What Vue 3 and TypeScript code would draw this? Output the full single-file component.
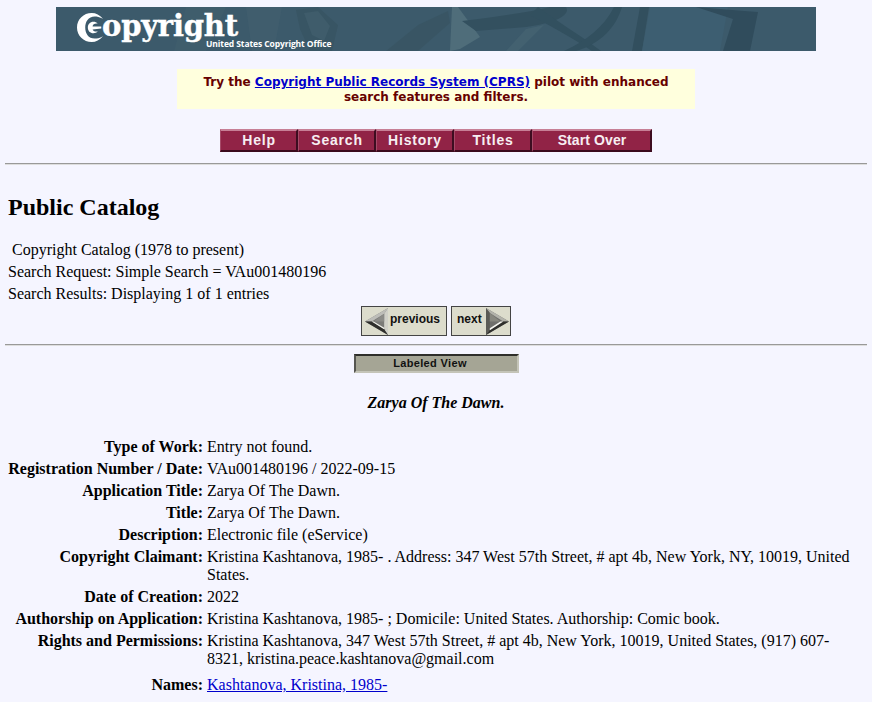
<script setup lang="ts">
interface Row { label: string; value: string; link?: boolean; extra?: boolean }
const navItems = [
  { label: 'Help', wide: false },
  { label: 'Search', wide: false },
  { label: 'History', wide: false },
  { label: 'Titles', wide: false },
  { label: 'Start Over', wide: true },
]
const rows: Row[] = [
  { label: 'Type of Work:', value: 'Entry not found.' },
  { label: 'Registration Number / Date:', value: 'VAu001480196 / 2022-09-15' },
  { label: 'Application Title:', value: 'Zarya Of The Dawn.' },
  { label: 'Title:', value: 'Zarya Of The Dawn.' },
  { label: 'Description:', value: 'Electronic file (eService)' },
  { label: 'Copyright Claimant:', value: 'Kristina Kashtanova, 1985- . Address: 347 West 57th Street, # apt 4b, New York, NY, 10019, United States.' },
  { label: 'Date of Creation:', value: '2022' },
  { label: 'Authorship on Application:', value: 'Kristina Kashtanova, 1985- ; Domicile: United States. Authorship: Comic book.' },
  { label: 'Rights and Permissions:', value: 'Kristina Kashtanova, 347 West 57th Street, # apt 4b, New York, 10019, United States, (917) 607-8321, kristina.peace.kashtanova@gmail.com' },
  { label: 'Names:', value: 'Kashtanova, Kristina, 1985-', link: true, extra: true },
]
</script>

<template>
  <div class="page">
    <header class="banner">
      <svg class="art" viewBox="0 0 760 44" preserveAspectRatio="none" aria-hidden="true">
        <rect width="760" height="44" fill="#3c5a6b" />
        <path d="M130 0 L170 0 L150 44 L118 44 Z" fill="#415f6e" opacity=".5" />
        <path d="M190 0 L226 0 L218 44 L196 44 Z" fill="#446170" opacity=".45" />
        <path d="M240 3 L262 0 L282 18 L276 44 L254 44 L244 22 Z" fill="#36515f" opacity=".6" />
        <path d="M248 6 L262 4 L274 19 L268 34 L256 28 Z" fill="#466371" opacity=".5" />
        <path d="M330 44 L362 18 L392 4 L394 16 L362 44 Z" fill="#37525f" opacity=".55" />
        <path d="M396 0 L402 0 L424 30 L404 42 L394 44 Z" fill="#4f6d7a" />
        <path d="M406 14 C440 10 480 4 494 0 L510 0 C515 8 500 16 470 20 L420 24 Z" fill="#33505f" />
        <path d="M470 22 L488 18 L462 44 L450 44 Z" fill="#466472" opacity=".7" />
        <path d="M482 0 C500 14 520 25 545 44 L536 44 C512 28 492 18 474 8 Z" fill="#32505f" />
        <path d="M566 0 L558 0 C548 20 530 34 508 44 L520 44 C546 36 560 20 566 0 Z" fill="#32505f" />
        <path d="M584 0 L593 0 L586 44 L576 44 Z" fill="#324f5e" />
        <path d="M594 0 H672 L664 44 H586 Z" fill="#3d5e71" />
        <path d="M640 0 L688 4 L702 5 L694 44 L667 44 L677 12 Z" fill="#304c5c" />
      </svg>
      <div class="logo">
        <svg class="logo-c" viewBox="0 0 30 30" preserveAspectRatio="none" aria-hidden="true">
          <path fill="#fff" fill-rule="evenodd" d="M17 0 C7.500 0 0 6.500 0 15 C0 23.500 7.500 30 17 30 C22 30 26 28 30 24 C26 26 23 26.500 20.500 26.500 C13 26.500 9.500 21 9.500 15 C9.500 9 13 3.500 20.500 3.500 C23 3.500 26 4 30 6 C26 2 22 0 17 0 Z" />
          <path fill="#fff" d="M19 9 C15 9 12.500 11.500 12.500 15 C12.500 18.500 15 21 19 21 C21 21 22.500 20.500 24 19 C21 19.500 19 19 18 17 L28 16 L28 14 L18 14 C18 12 20.500 10.500 24 11 C22.500 9.500 21 9 19 9 Z" />
        </svg>
        <span class="logo-word">opyright</span>
        <span class="logo-sub">United States Copyright Office</span>
      </div>
    </header>

    <div class="notice">
      <p>Try the <a href="#">Copyright Public Records System (CPRS)</a> pilot with enhanced search features and filters.</p>
    </div>

    <nav class="nav">
      <a v-for="item in navItems" :key="item.label" href="#" class="nav-btn" :class="{ wide: item.wide }">{{ item.label }}</a>
    </nav>

    <hr class="rule first" />

    <h1 class="heading">Public Catalog</h1>

    <div class="meta">
      <div class="indent">Copyright Catalog (1978 to present)</div>
      <div>Search Request: Simple Search = VAu001480196</div>
      <div>Search Results: Displaying 1 of 1 entries</div>
    </div>

    <div class="pager">
      <a href="#" class="pg prev">
        <svg class="arrow" viewBox="0 0 24 28" aria-hidden="true">
          <path d="M24 0 L0 14 L24 28 Z" fill="#7b7b78" />
          <path d="M24 0 L0 14 L7 14 L20 6 Z" fill="#bdbdb8" />
          <path d="M24 0 L20 6 L20 22 L24 28 Z" fill="#d0d0c8" />
          <path d="M0 14 L24 28 L20 22 L7 14 Z" fill="#2f2f2c" />
          <path d="M7 14 L20 22 L20 20.600 L9 14 Z" fill="#f4f4ee" />
          <path d="M20 6 L9 14 L20 14 Z" fill="#8c8c88" />
        </svg>
        <span>previous</span>
      </a>
      <a href="#" class="pg next">
        <span>next</span>
        <svg class="arrow" viewBox="0 0 24 28" aria-hidden="true">
          <path d="M0 0 L24 14 L0 28 Z" fill="#6f6f6c" />
          <path d="M0 0 L24 14 L18 14 L4 5 Z" fill="#b2b2aa" />
          <path d="M0 0 L4 5 L4 23 L0 28 Z" fill="#5a5a55" />
          <path d="M24 14 L0 28 L4 23 L18 14 Z" fill="#2f2f2c" />
          <path d="M18 14 L4 23 L4 21 L15 14 Z" fill="#f7f7f2" />
          <path d="M4 5 L15 14 L4 14 Z" fill="#87877f" />
        </svg>
      </a>
    </div>

    <hr class="rule second" />

    <div class="view-row"><div class="view-tab">Labeled View</div></div>

    <div class="record-title">Zarya Of The Dawn.</div>

    <dl class="record">
      <div v-for="row in rows" :key="row.label" class="rec-row" :class="{ extra: row.extra }">
        <dt>{{ row.label }}</dt>
        <dd><a v-if="row.link" href="#" class="name-link">{{ row.value }}</a><template v-else>{{ row.value }}</template></dd>
      </div>
    </dl>
  </div>
</template>

<style>
html, body { margin: 0; background: #f5f5ff; overflow: hidden; }
</style>

<style scoped>
.page {
  font-family: "Liberation Serif", "Times New Roman", serif;
  font-size: 16px;
  line-height: 18px;
  color: #000;
  background: #f5f5ff;
  padding-top: 7px;
  display: flex;
  flex-direction: column;
}
.banner {
  position: relative;
  width: 760px;
  height: 44px;
  margin-left: 56px;
  overflow: hidden;
}
.art { position: absolute; inset: 0; width: 100%; height: 100%; display: block; }
.logo { position: absolute; inset: 0; }
.logo-c { position: absolute; left: 21px; top: 6px; width: 26px; height: 29px; }
.logo-word {
  position: absolute;
  left: 46px;
  top: 1px;
  font-family: "DejaVu Serif", serif;
  font-weight: 700;
  font-size: 29px;
  line-height: 36px;
  letter-spacing: -0.2px;
  -webkit-text-stroke: 0.4px #fff;
  color: #fff;
}
.logo-sub {
  position: absolute;
  left: 150px;
  top: 31px;
  font-family: "Open Sans", sans-serif;
  font-weight: 700;
  font-size: 8.5px;
  line-height: 12px;
  letter-spacing: -0.1px;
  color: #fff;
  white-space: nowrap;
}
.notice {
  box-sizing: border-box;
  width: 518px;
  height: 40px;
  margin: 18px 0 0 177px;
  padding-top: 6px;
  background: #ffffdd;
  display: flex;
  align-items: flex-start;
  justify-content: center;
}
.notice p {
  margin: 0;
  width: 490px;
  text-align: center;
  font-family: "DejaVu Sans", Verdana, sans-serif;
  font-weight: 700;
  font-size: 12px;
  line-height: 15px;
  color: #660000;
}
.notice a { color: #0000cc; }
.nav {
  display: flex;
  margin: 20px 0 0 220px;
  width: 432px;
  height: 23px;
}
.nav-btn {
  width: 78px;
  box-sizing: border-box;
  padding-left: 1px;
  background: #912346;
  border-top: 2px solid #c77f96;
  border-left: 1px solid #a64a68;
  border-right: 2px solid #3d0d20;
  border-bottom: 2px solid #3a0a1c;
  color: #f7eef2;
  text-decoration: none;
  text-align: center;
  font-family: "Liberation Sans", Arial, sans-serif;
  font-weight: 700;
  font-size: 14px;
  line-height: 18px;
  letter-spacing: 0.8px;
}
.nav-btn.wide { width: 120px; letter-spacing: 0.1px; }
.rule {
  margin: 0 5px;
  height: 0;
  border: 0;
  border-top: 1px solid #999;
  border-bottom: 1px solid #ddd;
}
.rule.first { margin-top: 11px; }
.rule.second { margin-top: 8px; }
.heading {
  margin: 29px 0 0 8px;
  font-size: 24px;
  line-height: 27px;
  font-weight: 700;
}
.meta { margin: 20px 0 0 8px; display: flex; flex-direction: column; gap: 4px; }
.indent { padding-left: 4px; }
.pager {
  display: flex;
  justify-content: center;
  gap: 4px;
  margin-top: 3px;
  height: 30px;
}
.pg {
  box-sizing: border-box;
  height: 30px;
  background: #dcdccc;
  border: 1px solid #444;
  display: flex;
  align-items: center;
  text-decoration: none;
  color: #111;
  font-family: "Liberation Sans", Arial, sans-serif;
  font-weight: 700;
  font-size: 12px;
  line-height: 14px;
}
.pg span { position: relative; top: -2px; }
.prev { width: 86px; padding-left: 3px; gap: 2px; }
.next { width: 60px; padding-left: 5px; gap: 4px; }
.arrow { width: 23px; height: 27px; flex: none; }
.view-row { margin: 8px 0 0 354px; }
.view-tab {
  box-sizing: border-box;
  width: 165px;
  height: 19px;
  padding-right: 13px;
  background: #a5a595;
  border-top: 2px solid #2e2e2a;
  border-left: 2px solid #555550;
  border-right: 2px solid #c4c4b8;
  border-bottom: 2px solid #c4c4b8;
  text-align: center;
  font-family: "Liberation Sans", Arial, sans-serif;
  font-weight: 700;
  font-size: 11px;
  line-height: 15px;
  letter-spacing: 0.35px;
  color: #111;
}
.record-title {
  margin-top: 21px;
  text-align: center;
  font-weight: 700;
  font-style: italic;
}
.record { margin: 24px 0 0; display: flex; flex-direction: column; }
.rec-row {
  display: grid;
  grid-template-columns: 203px 1fr;
  column-gap: 4px;
  padding: 2px 0;
  padding-right: 18px;
}
.rec-row.extra { margin-top: 4px; }
dt { font-weight: 700; text-align: right; margin: 0; white-space: nowrap; }
dd { margin: 0; }
.name-link { color: #0000cc; }
</style>
